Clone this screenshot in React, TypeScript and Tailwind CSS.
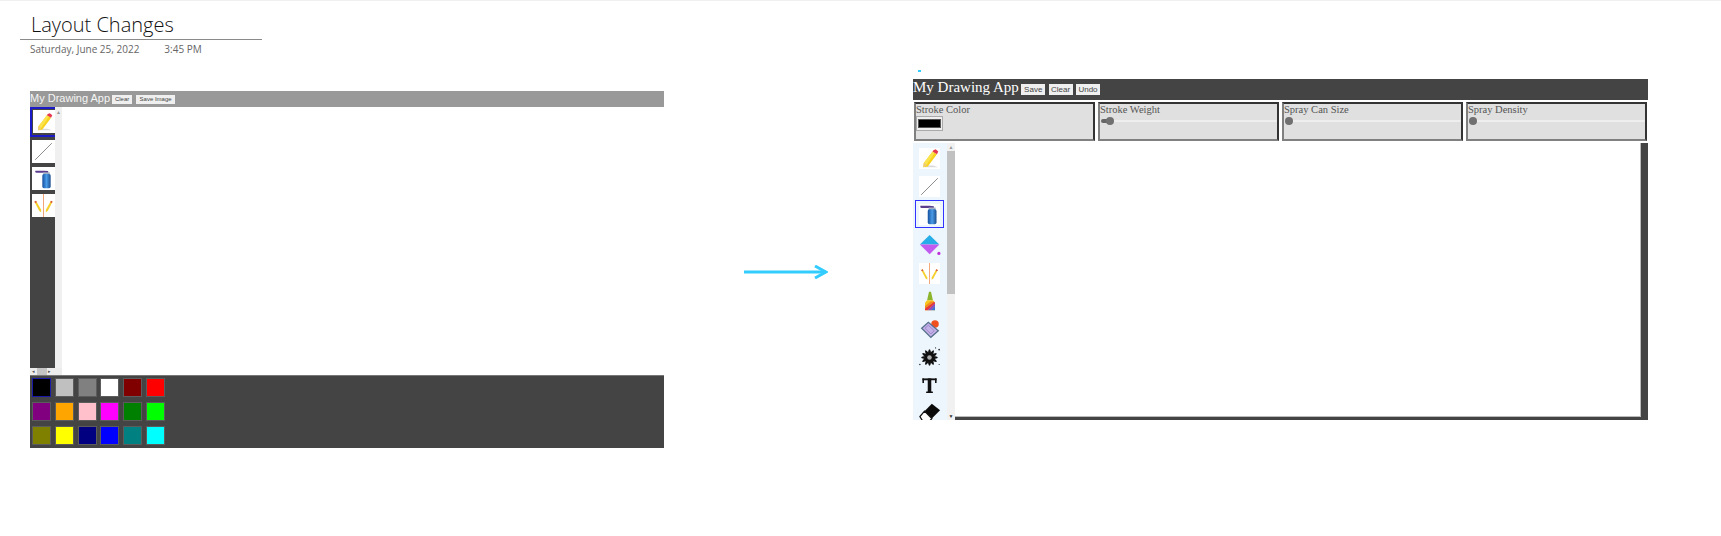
import React from "react";

const Pencil = ({ s = 20 }: { s?: number }) => (
  <svg width={s} height={s} viewBox="0 0 24 24">
    <path d="M6 22 L22 22 L16 20 L5 20Z" fill="#d9d9d9" />
    <path d="M15.5 4 L20.5 7 L10 21 L5 22 L5.5 17Z" fill="#f8d21c" />
    <path d="M15.5 4 L18 5.5 L7.5 21 L5 22 L5.5 17Z" fill="#fbe34d" />
    <path d="M5.5 17 L8.5 19.5 L5 22Z" fill="#e9c48a" />
    <path d="M16.5 2.5 L19 1.5 L22 4 L20.5 7 L15.5 4Z" fill="#e5374f" />
  </svg>
);
const LineIcon = ({ s = 20 }: { s?: number }) => (
  <svg width={s} height={s} viewBox="0 0 24 24">
    <line x1="2.5" y1="21.5" x2="21.5" y2="2.5" stroke="#888" strokeWidth="1.1" />
  </svg>
);
const Spray = ({ s = 20, id }: { s?: number; id: string }) => (
  <svg width={s} height={s} viewBox="0 0 24 24">
    <defs>
      <linearGradient id={id} x1="0" x2="1" y1="0" y2="0">
        <stop offset="0" stopColor="#134f9e" />
        <stop offset="0.5" stopColor="#4a9be8" />
        <stop offset="1" stopColor="#1c4f8f" />
      </linearGradient>
    </defs>
    <path d="M1.5 2 H12 L17 2.5 V5 L12 4.5 H3 L1.5 4Z" fill="#5a3d8f" />
    <rect x="11" y="4" width="8" height="3" fill="#a5b0c2" />
    <rect x="10" y="6" width="10" height="17" rx="2" fill={`url(#${id})`} />
  </svg>
);
const FillIcon = ({ s = 20 }: { s?: number }) => (
  <svg width={s} height={s} viewBox="0 0 26 26" overflow="visible">
    <path d="M12 1 L23 12 H1Z" fill="#27aee8" />
    <path d="M1 12 H23 L12 23Z" fill="#c25cf0" />
    <circle cx="22.5" cy="22" r="1.8" fill="#c02fd8" />
  </svg>
);
const Symmetry = ({ s = 20 }: { s?: number }) => (
  <svg width={s} height={s} viewBox="0 0 24 24">
    <line x1="12" y1="0" x2="12" y2="24" stroke="#f2a476" strokeWidth="1.1" />
    <path d="M2.5 8 L4.2 7 L9.5 16.5 L9.5 19 L7.5 17.5Z" fill="#f5cf2a" />
    <path d="M2.5 8 L4.2 7 L5 8.5 L3.3 9.5Z" fill="#d94a4a" />
    <path d="M21.5 8 L19.8 7 L14.5 16.5 L14.5 19 L16.5 17.5Z" fill="#f5cf2a" />
    <path d="M21.5 8 L19.8 7 L19 8.5 L20.7 9.5Z" fill="#d94a4a" />
  </svg>
);
const Bottle = ({ s = 20 }: { s?: number }) => (
  <svg width={s} height={s} viewBox="0 0 24 24">
    <path d="M10.8 1 H13.2 L15.5 11 H8.5Z" fill="#8cb52e" />
    <path d="M8.5 11 H15.5 L18 14 V23 H6 V14Z" fill="#f7c520" />
    <path d="M6 18 L13 12.5 H17 L6 21Z" fill="#f08a20" />
    <path d="M6 21 L17 13 L18 14 V15 L9 23 H6Z" fill="#e6383c" />
    <path d="M9 23 L18 15 V18 L13 23Z" fill="#8a45c8" />
    <path d="M13 23 L18 18 V23Z" fill="#3a6fd8" />
  </svg>
);
const Stamp = ({ s = 20 }: { s?: number }) => (
  <svg width={s} height={s} viewBox="0 0 24 24">
    <circle cx="18" cy="6" r="4.5" fill="#f0501e" />
    <path d="M2 11 L10 4 L22 14 L13 22Z" fill="#c3b0e8" stroke="#55708a" strokeWidth="1.5" />
    <path d="M6 11 L10 7.5 L17 14 L13 18Z" fill="none" stroke="#8a78b8" strokeWidth="0.8" />
  </svg>
);
const Splatter = ({ s = 20 }: { s?: number }) => (
  <svg width={s} height={s} viewBox="0 0 24 24">
    {[0, 30, 60, 90, 120, 150].map((a) => (
      <ellipse key={a} cx="12" cy="12" rx="2.1" ry="9.5" fill="#111" transform={`rotate(${a} 12 12)`} />
    ))}
    <circle cx="12" cy="12" r="2.6" fill="#aaa" />
    <circle cx="23" cy="3" r="0.9" fill="#111" />
    <circle cx="1" cy="20" r="0.8" fill="#111" />
    <circle cx="19" cy="1" r="0.6" fill="#111" />
    <circle cx="23" cy="20" r="0.6" fill="#111" />
  </svg>
);
const TIcon = ({ s = 20 }: { s?: number }) => (
  <svg width={s} height={s} viewBox="0 0 24 24">
    <rect x="2" y="2" width="20" height="2.6" fill="#111" />
    <rect x="2" y="2" width="2.2" height="6.5" fill="#111" />
    <rect x="19.8" y="2" width="2.2" height="6.5" fill="#111" />
    <rect x="9.5" y="2" width="5" height="20" fill="#111" />
    <rect x="7" y="20.5" width="10" height="2.2" rx="1" fill="#111" />
  </svg>
);
const Eraser = ({ s = 20 }: { s?: number }) => (
  <svg width={s} height={s} viewBox="0 0 24 24">
    <path d="M14 2 L23 9 L14 18 L6 10Z" fill="#0a0a0a" />
    <path d="M6 10 L14 18 L9 24 H6 L1 16Z" fill="#fff" stroke="#111" strokeWidth="1.4" />
  </svg>
);

const Sw = ({ c, first }: { c: string; first?: boolean }) => (
  <div
    className={`h-[19px] w-[19px] border ${first ? "border-[#1a1aa8]" : "border-[#5c5c5c]"}`}
    style={{ backgroundColor: c }}
  />
);

const colors = [
  "#000000", "#c0c0c0", "#808080", "#ffffff", "#800000", "#ff0000",
  "#800080", "#ffa500", "#ffc0cb", "#ff00ff", "#008000", "#00ff00",
  "#808000", "#ffff00", "#000080", "#0000ff", "#008080", "#00ffff",
];

const Slider = ({ label, weight }: { label: string; weight?: boolean }) => (
  <div className="h-[39px] w-[181px] border-2 border-t-[#333] border-r-[#333] border-b-[#808080] border-l-[#808080] bg-[#e0e0e0] font-['Liberation_Serif',serif] text-[10.5px] leading-[12px] text-[#555]">
    <div>{label}</div>
    <div className="relative ml-px mt-px h-[8px] w-[176px]">
      <div className="absolute left-0 right-0 top-[3px] h-[2px] rounded bg-[#eeeeee]" />
      {weight && <div className="absolute left-0 top-[2px] h-[4px] w-[7px] rounded-l bg-[#666]" />}
      <div className={`absolute top-0 h-[8px] w-[8px] rounded-full bg-[#707070] ${weight ? "left-[5px]" : "left-0"}`} />
    </div>
  </div>
);

const SmallBtn = ({ t, w }: { t: string; w: string }) => (
  <div className={`flex h-[9px] items-center justify-center bg-[#efefef] text-[6px] leading-none text-[#444] ${w}`}>{t}</div>
);
const AppBtn = ({ t }: { t: string }) => (
  <div className="flex h-[11px] w-[24px] items-center justify-center bg-[#efefef] font-['Liberation_Sans',sans-serif] text-[8px] leading-none text-[#444]">{t}</div>
);

const Tool = ({ children, selected, gap }: { children: React.ReactNode; selected?: boolean; gap?: boolean }) => (
  <div className={`flex h-[28px] w-[29px] shrink-0 items-center justify-center ${selected ? "border border-[#3333ff]" : ""} ${gap ? "mt-[3px]" : ""}`}>
    <div className="bg-white">{children}</div>
  </div>
);

const OldTool = ({ children, h, mt }: { children: React.ReactNode; h: string; mt: string }) => (
  <div className={`ml-[2px] flex w-[23px] items-center justify-center bg-white ${h} ${mt}`}>{children}</div>
);

export default function App() {
  return (
    <div className="flex h-[536px] w-[1721px] overflow-hidden border-t border-[#f0f0f0] bg-white font-['Liberation_Sans',sans-serif]">
      <div className="w-[744px] shrink-0">
        <div className="ml-[20px] w-[242px] border-b border-[#8a8a8a] pl-[11px] pt-[10px] font-['Open_Sans',sans-serif] text-[20px] font-light leading-[28px] text-[#111]">
          Layout Changes
        </div>
        <div className="ml-[30px] mt-[2px] flex gap-[25px] font-['Open_Sans',sans-serif] text-[10px] leading-[14px] text-[#666]">
          <span>Saturday, June 25, 2022</span>
          <span>3:45 PM</span>
        </div>
        <div className="ml-[30px] mt-[35px] w-[634px]">
          <div className="flex h-[16px] items-center gap-[2px] bg-[#999999] text-[11px] leading-none text-[#f5f5f5]">
            <span className="-mt-[2px]">My Drawing App</span>
            <SmallBtn t="Clear" w="w-[20px]" />
            <SmallBtn t="Save Image" w="ml-[2px] w-[39px]" />
          </div>
          <div className="flex h-[261px]">
            <div className="w-[25px] bg-[#444444]">
              <div className="h-[30px] border-2 border-[#1a1ac8] border-r-0 bg-[#444444] pl-px pt-px pb-[2px]">
                <div className="flex h-[23px] items-center justify-center bg-white"><Pencil s={20} /></div>
              </div>
              <OldTool h="h-[23px]" mt="mt-[3px]"><LineIcon s={21} /></OldTool>
              <OldTool h="h-[23px]" mt="mt-[4px]"><Spray s={20} id="a" /></OldTool>
              <OldTool h="h-[23px]" mt="mt-[4px]"><Symmetry s={23} /></OldTool>
            </div>
            <div className="flex w-[7px] justify-center bg-[#f0f0f0] pt-[3px] text-[5px] leading-none text-[#999]">▲</div>
            <div className="flex-1 bg-white" />
          </div>
          <div className="flex h-[7px] w-[32px] items-center bg-[#ececec] text-[5px] leading-none text-[#555]">
            <span className="w-[7px] text-center">◂</span>
            <div className="h-full w-[10px] bg-[#c4c4c4]" />
            <span className="ml-[1px]">▸</span>
          </div>
          <div className="h-[73px] border-t border-[#777] bg-[#444444] pl-[2px] pt-[2px]">
            <div className="grid grid-cols-[repeat(6,19px)] gap-x-[3.8px] gap-y-[5px]">
              {colors.map((c, i) => <Sw key={c} c={c} first={i === 0} />)}
            </div>
          </div>
        </div>
      </div>
      <div className="mt-[264px] w-[84px] shrink-0 self-start">
        <svg width="84" height="14" viewBox="0 0 84 14">
          <path d="M0 7 H82" stroke="#33ccff" strokeWidth="3" fill="none" />
          <path d="M71 1 L82 7 L71 13" stroke="#33ccff" strokeWidth="3" fill="none" />
        </svg>
      </div>
      <div className="ml-[85px] mt-[69px] w-[735px] shrink-0">
        <div className="ml-[5px] h-[2px] w-[3px] bg-[#33ccff]" />
        <div className="mt-[7px] flex h-[21px] items-center gap-[3.4px] bg-[#444444] font-['Liberation_Serif',serif] text-[15px] leading-none text-white">
          <span className="-mt-[4px] mr-[-1px]">My Drawing App</span>
          <AppBtn t="Save" />
          <AppBtn t="Clear" />
          <AppBtn t="Undo" />
        </div>
        <div className="mt-[2px] flex gap-[3px] pl-px">
          <div className="h-[39px] w-[181px] border-2 border-t-[#333] border-r-[#333] border-b-[#808080] border-l-[#808080] bg-[#e0e0e0] font-['Liberation_Serif',serif] text-[10.5px] leading-[12px] text-[#555]">
            <div>Stroke Color</div>
            <div className="flex h-[15px] w-[27px] items-center justify-center border border-[#aaa] bg-[#efefef]">
              <div className="h-[9px] w-[23px] border border-[#555] bg-black" />
            </div>
          </div>
          <Slider label="Stroke Weight" weight />
          <Slider label="Spray Can Size" />
          <Slider label="Spray Density" />
        </div>
        <div className="mt-[2px] flex h-[277px]">
          <div className="flex w-[34px] flex-col items-center overflow-hidden bg-[#eef6fd] pr-[1px] pt-[1px]">
            <Tool><Pencil s={21} /></Tool>
            <Tool><LineIcon s={21} /></Tool>
            <Tool selected><Spray s={21} id="b" /></Tool>
            <Tool gap><div className="bg-[#eef6fd] pl-px"><FillIcon s={23} /></div></Tool>
            <Tool><Symmetry s={21} /></Tool>
            <Tool><div className="bg-[#eef6fd]"><Bottle s={20} /></div></Tool>
            <Tool><div className="bg-[#eef6fd]"><Stamp s={20} /></div></Tool>
            <Tool><div className="bg-[#eef6fd]"><Splatter s={21} /></div></Tool>
            <Tool><div className="bg-[#eef6fd]"><TIcon s={17} /></div></Tool>
            <Tool><div className="bg-[#eef6fd]"><Eraser s={22} /></div></Tool>
          </div>
          <div className="flex w-[8px] flex-col bg-[#f1f1f1]">
            <div className="flex h-[8px] items-center justify-center text-[5px] leading-none text-[#999]">▲</div>
            <div className="h-[143px] bg-[#c1c1c1]" />
            <div className="flex-1" />
            <div className="flex h-[8px] items-center justify-center text-[5px] leading-none text-[#333]">▼</div>
          </div>
          <div className="flex flex-1 flex-col">
            <div className="flex flex-1">
              <div className="flex-1 border-b border-r border-[#bbb] bg-white" />
              <div className="w-[7px] bg-[#444444]" />
            </div>
            <div className="h-[3px] bg-[#444444]" />
          </div>
        </div>
      </div>
    </div>
  );
}
